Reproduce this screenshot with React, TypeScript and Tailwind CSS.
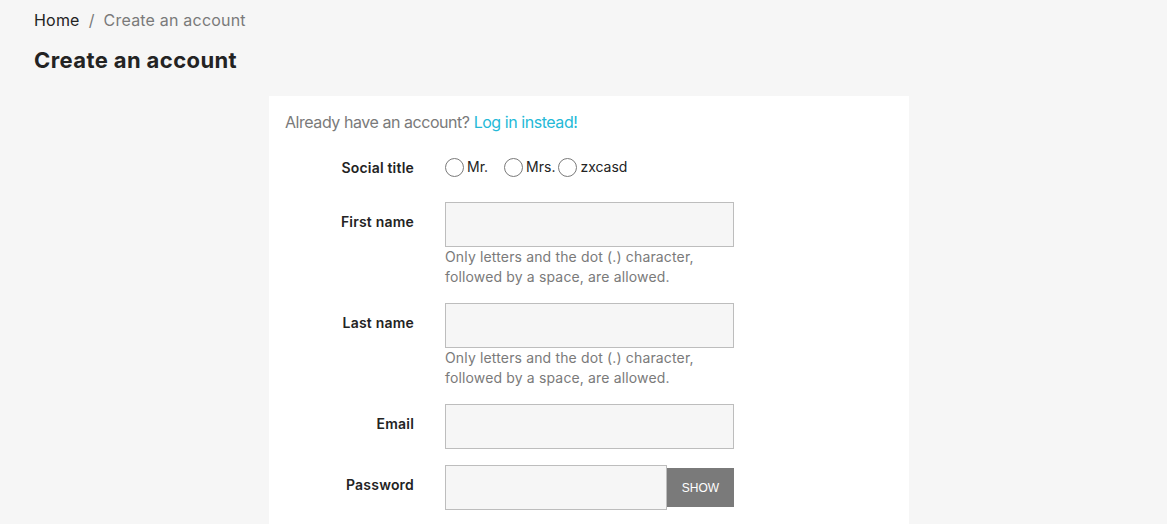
import React from "react";

const font = { fontFamily: "Inter, 'Noto Sans', sans-serif" };

const Radio = ({ label }: { label: string }) => (
  <label className="flex items-center">
    <span className="w-[19px] h-[19px] rounded-full border border-[#7a7a7a] bg-white" />
    <span className="ml-[3px] -mt-[3px] text-[14px] text-[#232323]">{label}</span>
  </label>
);

const Field = ({ label, help }: { label: string; help?: boolean }) => (
  <div className="flex">
    <div className="w-[129px] pt-[9px] text-right text-[14px] font-semibold text-[#232323] tracking-[0.2px]">{label}</div>
    <div className="ml-[31px] w-[289px]">
      <input className="block w-full h-[45px] bg-[#f6f6f6] border border-[#bdbdbd] outline-none" />
      {help && (
        <div className="text-[14px] leading-[20px] text-[#7a7a7a] tracking-[0.15px]">
          Only letters and the dot (.) character,
          <br />
          followed by a space, are allowed.
        </div>
      )}
    </div>
  </div>
);

export default function App() {
  return (
    <div className="min-h-[524px] bg-[#f6f6f6] px-[34px] pt-[8px]" style={font}>
      <nav className="text-[16px] leading-[24px] tracking-[0.2px]">
        <span className="text-[#232323]">Home</span>
        <span className="mx-[9px] text-[#7a7a7a]">/</span>
        <span className="text-[#7a7a7a]">Create an account</span>
      </nav>
      <h1 className="mt-[12px] text-[22px] leading-[32px] font-bold text-[#232323] tracking-[0.4px]">
        Create an account
      </h1>
      <div className="ml-[235px] mt-[20px] w-[640px] h-[428px] bg-white px-[16px] pt-[14px]">
        <p className="text-[16px] leading-[24px] text-[#7a7a7a] tracking-[-0.45px]">
          Already have an account?{" "}
          <a className="text-[#24b9d7]">Log in instead!</a>
        </p>
        <div className="mt-[23px] flex items-center">
          <div className="w-[129px] text-right text-[14px] font-semibold text-[#232323] tracking-[0.2px]">Social title</div>
          <div className="ml-[31px] flex items-center">
            <Radio label="Mr." />
            <div className="ml-[16px]">
              <Radio label="Mrs." />
            </div>
            <div className="ml-[3px]">
              <Radio label="zxcasd" />
            </div>
          </div>
        </div>
        <div className="mt-[24px] flex flex-col gap-[16px]">
          <Field label="First name" help />
          <Field label="Last name" help />
          <Field label="Email" />
          <div className="flex">
            <div className="w-[129px] pt-[9px] text-right text-[14px] font-semibold text-[#232323] tracking-[0.2px]">Password</div>
            <div className="ml-[31px] w-[289px] flex items-center">
              <input className="block w-[222px] h-[45px] bg-[#f6f6f6] border border-[#bdbdbd] outline-none" />
              <button className="w-[67px] h-[39px] bg-[#7a7a7a] text-white text-[12px] uppercase" style={{ fontFamily: "'Liberation Sans', Arial, sans-serif" }}>
                Show
              </button>
            </div>
          </div>
        </div>
      </div>
    </div>
  );
}
